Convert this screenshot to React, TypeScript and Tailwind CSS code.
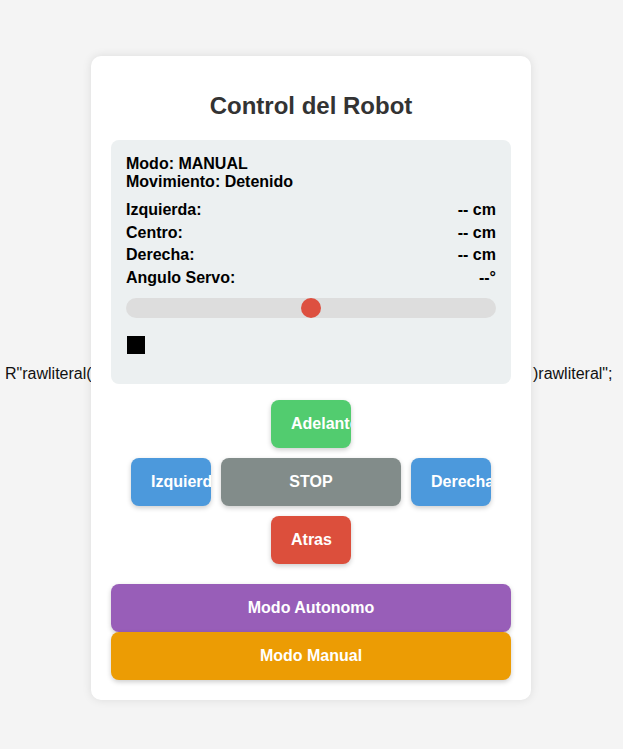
import React from "react";

function Btn({ label, className }: { label: string; className: string }) {
  return (
    <div
      className={`h-[48px] overflow-hidden whitespace-nowrap rounded-[8px] px-5 text-center text-[16px] font-bold leading-[48px] text-white shadow-[0_2px_5px_rgba(0,0,0,0.2)] ${className}`}
    >
      {label}
    </div>
  );
}

export default function App() {
  const rows: [string, string][] = [
    ["Izquierda:", "-- cm"],
    ["Centro:", "-- cm"],
    ["Derecha:", "-- cm"],
    ["Angulo Servo:", "--°"],
  ];
  return (
    <div className="flex h-[749px] items-center bg-[#f4f4f4] pl-[5px] font-['Liberation_Sans',Arial,sans-serif] text-[16px] leading-[18.4px] text-[#111]">
      <span className="w-[86px] shrink-0 whitespace-nowrap">R"rawliteral(</span>
      <div className="mt-[7px] w-[440px] shrink-0 rounded-[10px] bg-white px-5 pb-5 pt-[36px] shadow-[0_0_10px_rgba(0,0,0,0.1)]">
        <h1 className="text-center text-[24px] font-bold leading-[28px] text-[#333]">
          Control del Robot
        </h1>
        <div className="mt-5 rounded-[8px] bg-[#ecf0f1] px-[15px] pb-[30px] pt-[15px] font-bold text-black">
          <div>Modo: MANUAL</div>
          <div>Movimiento: Detenido</div>
          <div className="mt-[9px] flex flex-col gap-[4.5px]">
            {rows.map(([k, v]) => (
              <div key={k} className="flex justify-between">
                <span>{k}</span>
                <span>{v}</span>
              </div>
            ))}
          </div>
          <div className="mt-[10.5px] flex h-5 w-full justify-center rounded-full bg-[#dddddd]">
            <div className="h-5 w-5 rounded-full bg-[#dd5040]" />
          </div>
          <div className="ml-[1px] mt-[18px] h-[18px] w-[18px] bg-black" />
        </div>
        <div className="mt-[16px] flex flex-col items-center gap-[10px]">
          <Btn label="Adelante" className="w-[80px] bg-[#52cc6f]" />
          <div className="flex gap-[10px]">
            <Btn label="Izquierda" className="w-[80px] bg-[#4c99dc]" />
            <Btn label="STOP" className="w-[180px] bg-[#828c8a]" />
            <Btn label="Derecha" className="w-[80px] bg-[#4c99dc]" />
          </div>
          <Btn label="Atras" className="w-[80px] bg-[#dc4f3c]" />
        </div>
        <div className="mt-5 flex flex-col">
          <Btn label="Modo Autonomo" className="w-full bg-[#985eb8]" />
          <Btn label="Modo Manual" className="w-full bg-[#ec9c04]" />
        </div>
      </div>
      <span className="ml-[2px] whitespace-nowrap">)rawliteral";</span>
    </div>
  );
}
